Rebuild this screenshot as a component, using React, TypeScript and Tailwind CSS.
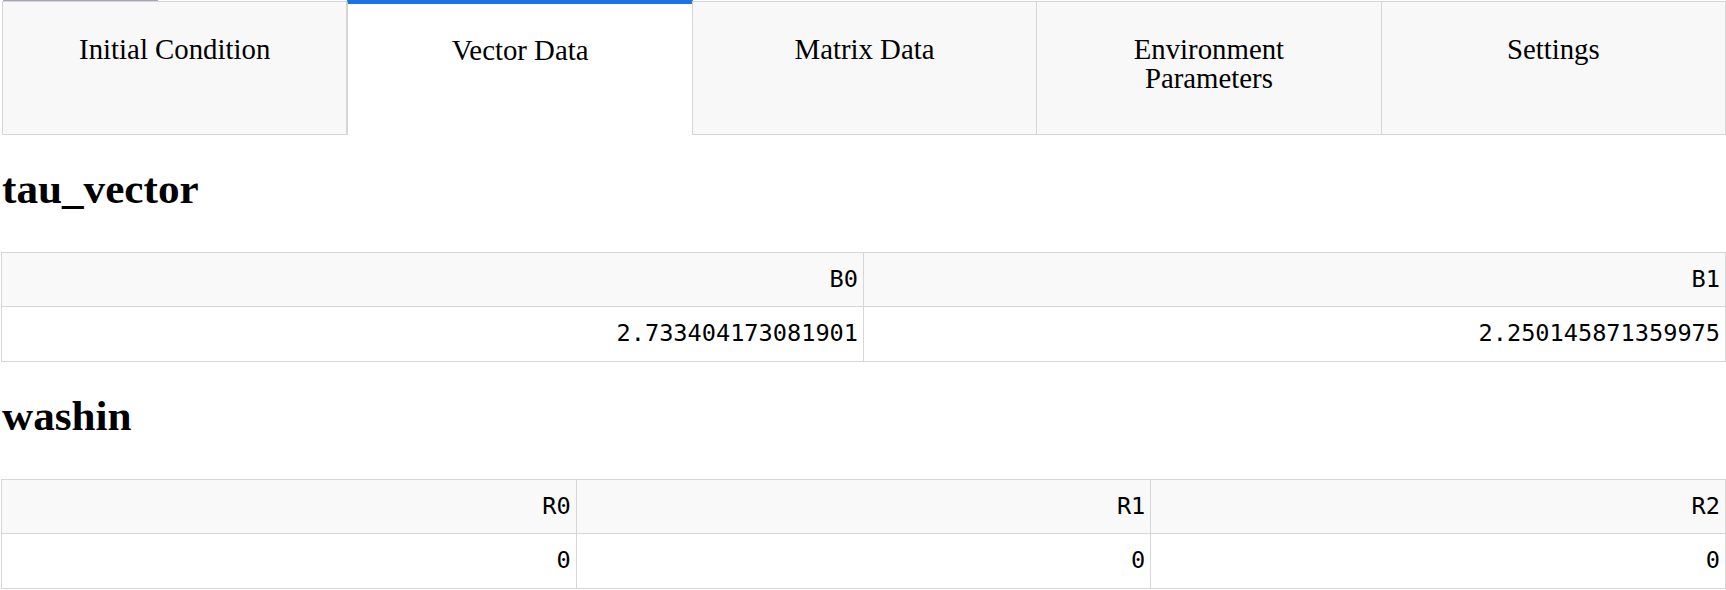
import { useState } from "react";

const tabs = [
  "Initial Condition",
  "Vector Data",
  "Matrix Data",
  "Environment Parameters",
  "Settings",
];

// vector tables shown on the "Vector Data" tab
const vectors: { name: string; cols: string[]; values: string[] }[] = [
  {
    name: "tau_vector",
    cols: ["B0", "B1"],
    values: ["2.733404173081901", "2.250145871359975"],
  },
  {
    name: "washin",
    cols: ["R0", "R1", "R2"],
    values: ["0", "0", "0"],
  },
];

function VectorTable({ cols, values }: { cols: string[]; values: string[] }) {
  return (
    <table className="w-full table-fixed border-collapse font-['DejaVu_Sans_Mono',monospace] text-[23.6px] text-black">
      <thead>
        <tr className="bg-[#f9f9f9]">
          {cols.map((c) => (
            <th
              key={c}
              className="h-[54px] border border-[#d6d6d6] pr-[5px] text-right font-normal"
            >
              {c}
            </th>
          ))}
        </tr>
      </thead>
      <tbody>
        <tr className="bg-white">
          {values.map((v, i) => (
            <td key={i} className="h-[55px] border border-[#d6d6d6] pr-[5px] text-right">
              {v}
            </td>
          ))}
        </tr>
      </tbody>
    </table>
  );
}

export default function App() {
  const [active, setActive] = useState(1);

  return (
    <div className="relative min-h-[590px] w-[1726px] overflow-hidden bg-white font-['Liberation_Serif',serif] text-black">
      {/* sliver of something scrolled off above */}
      <div className="absolute left-[3px] top-0 h-px w-[155px] bg-[#a3a3bb]" />

      <div className="ml-[2px] flex h-[135px] items-start">
        {tabs.map((t, i) =>
          i === active ? (
            <button
              key={t}
              onClick={() => setActive(i)}
              className="flex h-[135px] flex-1 flex-col items-center justify-start border-x border-t-4 border-x-[#d6d6d6] border-t-[#1a73e8] bg-white px-10 pt-[32px] text-center text-[28.8px] leading-[29px]"
            >
              <span className="block">{t}</span>
            </button>
          ) : (
            <button
              key={t}
              onClick={() => setActive(i)}
              className="-ml-px mt-px flex h-[134px] flex-1 flex-col items-center justify-start border border-[#d6d6d6] bg-[#f8f8f8] px-10 pt-[33px] text-center text-[28.8px] leading-[29px] first:ml-0"
            >
              <span className="block">{t}</span>
            </button>
          )
        )}
      </div>

      <div className="ml-px">
        {vectors.map((v) => (
          <div key={v.name}>
            <h2 className="ml-px mt-[30px] mb-[39px] h-[48px] text-[43.2px] font-bold leading-[48px]">
              {v.name}
            </h2>
            <VectorTable cols={v.cols} values={v.values} />
          </div>
        ))}
      </div>
    </div>
  );
}
